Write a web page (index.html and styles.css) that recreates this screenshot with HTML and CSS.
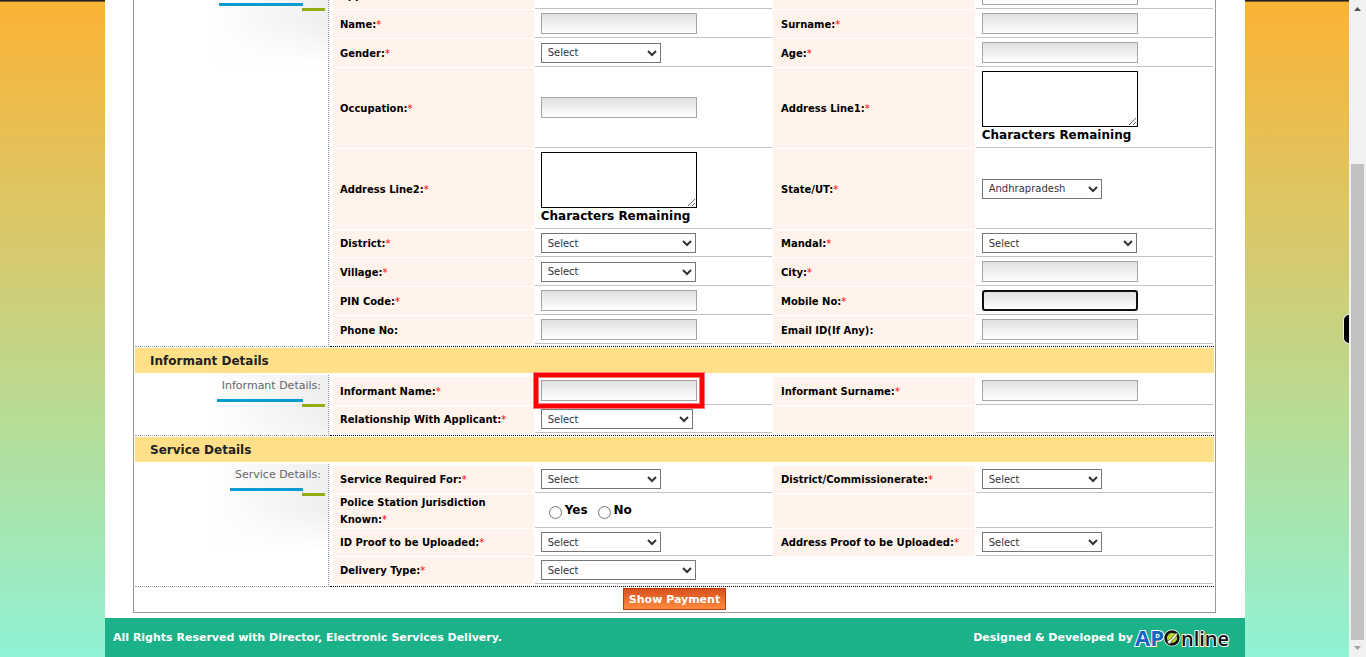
FILE: index.html
```html
<!DOCTYPE html>
<html lang="en">
<head>
<meta charset="utf-8">
<title>Electronic Services Delivery</title>
<link rel="stylesheet" href="styles.css">
</head>
<body>
<div class="viewport">
  <div class="backdrop">
    <div class="page">
      <form class="sheet">
        <section class="section section-first">
          <div class="aside"><h3 class="tab"><span>Applicant Details:</span></h3></div>
          <div class="fields">
            <div class="label"><span>Applicant:</span></div>
            <div class="value"></div>
            <div class="label"></div>
            <div class="value"><input class="text" type="text" aria-label="Applicant"></div>

            <label class="label" for="name"><span>Name:<b>*</b></span></label>
            <div class="value"><input class="text" id="name" type="text"></div>
            <label class="label" for="surname"><span>Surname:<b>*</b></span></label>
            <div class="value"><input class="text" id="surname" type="text"></div>

            <label class="label" for="gender"><span>Gender:<b>*</b></span></label>
            <div class="value"><select class="select" id="gender"><option>Select</option></select></div>
            <label class="label" for="age"><span>Age:<b>*</b></span></label>
            <div class="value"><input class="text" id="age" type="text"></div>

            <label class="label" for="occupation"><span>Occupation:<b>*</b></span></label>
            <div class="value"><input class="text" id="occupation" type="text"></div>
            <label class="label" for="address1"><span>Address Line1:<b>*</b></span></label>
            <div class="value"><textarea class="area" id="address1"></textarea><span class="note">Characters Remaining</span></div>

            <label class="label" for="address2"><span>Address Line2:<b>*</b></span></label>
            <div class="value"><textarea class="area" id="address2"></textarea><span class="note">Characters Remaining</span></div>
            <label class="label" for="state"><span>State/UT:<b>*</b></span></label>
            <div class="value"><select class="select" id="state"><option>Andhrapradesh</option></select></div>

            <label class="label" for="district"><span>District:<b>*</b></span></label>
            <div class="value"><select class="select select-wide" id="district"><option>Select</option></select></div>
            <label class="label" for="mandal"><span>Mandal:<b>*</b></span></label>
            <div class="value"><select class="select select-wide" id="mandal"><option>Select</option></select></div>

            <label class="label" for="village"><span>Village:<b>*</b></span></label>
            <div class="value"><select class="select select-wide" id="village"><option>Select</option></select></div>
            <label class="label" for="city"><span>City:<b>*</b></span></label>
            <div class="value"><input class="text" id="city" type="text"></div>

            <label class="label" for="pin"><span>PIN Code:<b>*</b></span></label>
            <div class="value"><input class="text" id="pin" type="text"></div>
            <label class="label" for="mobile"><span>Mobile No:<b>*</b></span></label>
            <div class="value"><input class="text text-focused" id="mobile" type="text"></div>

            <label class="label" for="phone"><span>Phone No:</span></label>
            <div class="value"><input class="text" id="phone" type="text"></div>
            <label class="label" for="email"><span>Email ID(If Any):</span></label>
            <div class="value"><input class="text" id="email" type="text"></div>
          </div>
        </section>

        <h2 class="band">Informant Details</h2>
        <section class="section">
          <div class="aside"><h3 class="tab"><span>Informant Details:</span></h3></div>
          <div class="fields">
            <label class="label" for="iname"><span>Informant Name:<b>*</b></span></label>
            <div class="value"><span class="marked"><input class="text" id="iname" type="text"></span></div>
            <label class="label" for="isurname"><span>Informant Surname:<b>*</b></span></label>
            <div class="value"><input class="text" id="isurname" type="text"></div>

            <label class="label" for="relation"><span>Relationship With Applicant:<b>*</b></span></label>
            <div class="value"><select class="select select-medium" id="relation"><option>Select</option></select></div>
            <div class="label"></div>
            <div class="value"></div>
          </div>
        </section>

        <h2 class="band">Service Details</h2>
        <section class="section">
          <div class="aside"><h3 class="tab"><span>Service Details:</span></h3></div>
          <div class="fields">
            <label class="label" for="service"><span>Service Required For:<b>*</b></span></label>
            <div class="value"><select class="select" id="service"><option>Select</option></select></div>
            <label class="label" for="commissionerate"><span>District/Commissionerate:<b>*</b></span></label>
            <div class="value"><select class="select" id="commissionerate"><option>Select</option></select></div>

            <div class="label" id="station"><span>Police Station Jurisdiction Known:<b>*</b></span></div>
            <div class="value choices" role="radiogroup" aria-labelledby="station">
              <input class="radio" type="radio" name="known" id="known-yes"><label class="choice" for="known-yes">Yes</label>
              <input class="radio" type="radio" name="known" id="known-no"><label class="choice" for="known-no">No</label>
            </div>
            <div class="label"></div>
            <div class="value"></div>

            <label class="label" for="idproof"><span>ID Proof to be Uploaded:<b>*</b></span></label>
            <div class="value"><select class="select" id="idproof"><option>Select</option></select></div>
            <label class="label" for="addressproof"><span>Address Proof to be Uploaded:<b>*</b></span></label>
            <div class="value"><select class="select" id="addressproof"><option>Select</option></select></div>

            <label class="label" for="delivery"><span>Delivery Type:<b>*</b></span></label>
            <div class="value value-full"><select class="select select-wide" id="delivery"><option>Select</option></select></div>
          </div>
        </section>

        <div class="actions"><button class="pay" type="button">Show Payment</button></div>
      </form>

      <footer class="footer">
        <span>All Rights Reserved with Director, Electronic Services Delivery.</span>
        <span class="credit">Designed &amp; Developed by
          <svg class="logo" width="100" height="26" viewBox="0 0 100 26" role="img" aria-label="APOnline">
            <g class="logo-type">
              <text class="logo-ap" x="2" y="21">AP</text>
              <text class="logo-line" x="48" y="21">nline</text>
            </g>
            <circle cx="39" cy="13" r="8.5" fill="#fff"/>
            <circle cx="39" cy="13" r="6.4" fill="#b9d532" stroke="#111" stroke-width="2.6"/>
            <path d="M34.500 16L39 13L42 8.500L45 8L43 12L39.500 15L37 19L35 18.500Z" fill="#fff" stroke="#33420c" stroke-width=".6"/>
          </svg>
        </span>
      </footer>
    </div>
    <span class="drawer"></span>
  </div>
  <div class="scrollbar">
    <svg width="17" height="17" viewBox="0 0 17 17"><path d="M5 11h7L8.500 7z" fill="#505050"/></svg>
    <span class="thumb"></span>
    <svg width="17" height="17" viewBox="0 0 17 17"><path d="M5 6h7L8.500 10z" fill="#a3a3a3"/></svg>
  </div>
</div>
</body>
</html>
```
FILE: styles.css
```css
* { box-sizing: border-box; }

body {
  margin: 0;
  font-family: "DejaVu Sans", Verdana, sans-serif;
  font-size: 10px;
  color: #000;
}

.viewport {
  display: flex;
  height: 100vh;
  overflow: hidden;
}

.backdrop {
  position: relative;
  flex: 1;
  display: flex;
  justify-content: center;
  padding-left: 1px;
  overflow: hidden;
  background: linear-gradient(#fbb335, #d6ca6e 38%, #b4de99 66%, #90f2d5);
}

.backdrop::before {
  content: "";
  position: absolute;
  inset: 0 0 auto;
  height: 2px;
  background: linear-gradient(#222 50%, #7a5a26 50%);
}

.page {
  position: relative;
  display: flex;
  flex-direction: column;
  width: 1140px;
  max-width: 100%;
  background: #fff;
}

.sheet {
  margin: 0 29px 5px 28px;
  padding: 0 1px;
  border: 1px solid #999;
  border-top: 0;
}

.section {
  display: flex;
  gap: 1px;
  margin-top: 2px;
}

/* The sheet is scrolled part of the way through its first row. */
.section-first { margin-top: -21px; }

.aside {
  flex: 0 0 194px;
  padding-right: 3px;
  border-right: 1px dotted #999;
  border-bottom: 1px dotted #999;
  background:
    linear-gradient(to top, #fff, rgba(255, 255, 255, 0) 50%) right top / 118px 86px no-repeat,
    linear-gradient(to right, #fff, #f0eeef) right top / 118px 86px no-repeat;
}

.tab {
  display: flex;
  flex-direction: column;
  width: fit-content;
  margin: 0 0 0 auto;
  font-size: 11px;
  font-weight: normal;
  line-height: 22px;
  color: #666;
}

.tab span { padding: 0 4px 2px 5px; }

.tab::before {
  content: "";
  order: 1;
  height: 3px;
  margin-right: 22px;
  background: #0a9bd0;
}

.tab::after {
  content: "";
  order: 2;
  align-self: flex-end;
  width: 23px;
  height: 3px;
  margin-top: 2px;
  background: #93ad0c;
}

.fields {
  flex: 1;
  display: grid;
  grid-template-columns: minmax(0, 17fr) minmax(0, 20fr) minmax(0, 17fr) minmax(0, 20fr);
  gap: 1px;
  padding: 2px 1px 2px 2px;
  border-bottom: 1px dotted #000;
}

.label {
  display: flex;
  align-items: center;
  padding: 0 8px;
  font-weight: bold;
  line-height: 17px;
  background: #fff3eb;
}

.label b {
  font-weight: normal;
  color: #f00;
}

.value {
  display: flex;
  flex-direction: column;
  justify-content: center;
  align-items: flex-start;
  padding: 3px 6px;
  border-bottom: 1px solid #c3c3c3;
}

.value-full { grid-column: span 3; }

.text {
  display: block;
  width: 156px;
  height: 21px;
  border: 1px solid #a5a5a5;
  background: linear-gradient(#e0e0e0, #fff);
  font: inherit;
}

.text-focused {
  border: 2px solid #101010;
  border-radius: 3px;
}

.select {
  width: 120px;
  height: 20px;
  padding: 0 2px;
  border: 1px solid #767676;
  border-radius: 0;
  background-color: #fff;
  font: inherit;
  color: #333;
}

.select-medium { width: 152px; }
.select-wide { width: 155px; }

.area {
  width: 156px;
  height: 56px;
  border: 1px solid #000;
  font: inherit;
}

.note,
.choice {
  font-size: 12px;
  font-weight: bold;
  line-height: 17px;
}

.choices {
  flex-direction: row;
  justify-content: flex-start;
  align-items: center;
  padding: 0 14px;
}

.radio {
  width: 13px;
  height: 13px;
  margin: 4px 3px 0 0;
}

.choice { margin-right: 10px; }

.marked { position: relative; }

.marked::after {
  content: "";
  position: absolute;
  inset: -7px;
  border: 4px solid #f00;
  box-shadow: 0 0 0 1px #ff7a7a, inset 0 0 0 1px #ff7a7a;
  pointer-events: none;
}

.band {
  margin: 1px 0 0;
  padding: 1px 0 0 15px;
  font-size: 12px;
  line-height: 24px;
  color: #222;
  background: #ffe088;
}

.actions {
  display: flex;
  justify-content: center;
  padding: 1px 0 2px;
}

.pay {
  height: 22px;
  padding: 0 5px;
  border: 1px solid #b8400f;
  background: linear-gradient(#d9501e, #ff8b3d);
  font: bold 11px "DejaVu Sans", Verdana, sans-serif;
  color: #fff;
}

.footer {
  flex: 1;
  display: flex;
  justify-content: space-between;
  align-items: center;
  padding: 0 12px 0 8px;
  background: #1bb189;
  font-size: 11px;
  font-weight: bold;
  color: #fff;
}

.credit {
  display: flex;
  align-items: center;
}

.logo-type {
  font-family: "Open Sans", "Noto Sans", sans-serif;
  font-weight: bold;
  stroke: #fff;
  stroke-width: 2px;
  stroke-linejoin: round;
  paint-order: stroke;
}

.logo-ap {
  font-size: 22px;
  fill: #1463c4;
}

.logo-line {
  font-size: 20px;
  font-weight: 600;
  fill: #111;
}

.drawer {
  position: absolute;
  right: 0;
  top: 314px;
  width: 6px;
  height: 30px;
  border: 1px solid #eee;
  border-right: 0;
  border-radius: 6px 0 0 6px;
  background: #000;
}

.scrollbar {
  flex: 0 0 17px;
  display: flex;
  flex-direction: column;
  background: #f1f1f1;
}

.thumb {
  flex: 1;
  margin: 147px 2px 0;
  background: #c1c1c1;
}
```
